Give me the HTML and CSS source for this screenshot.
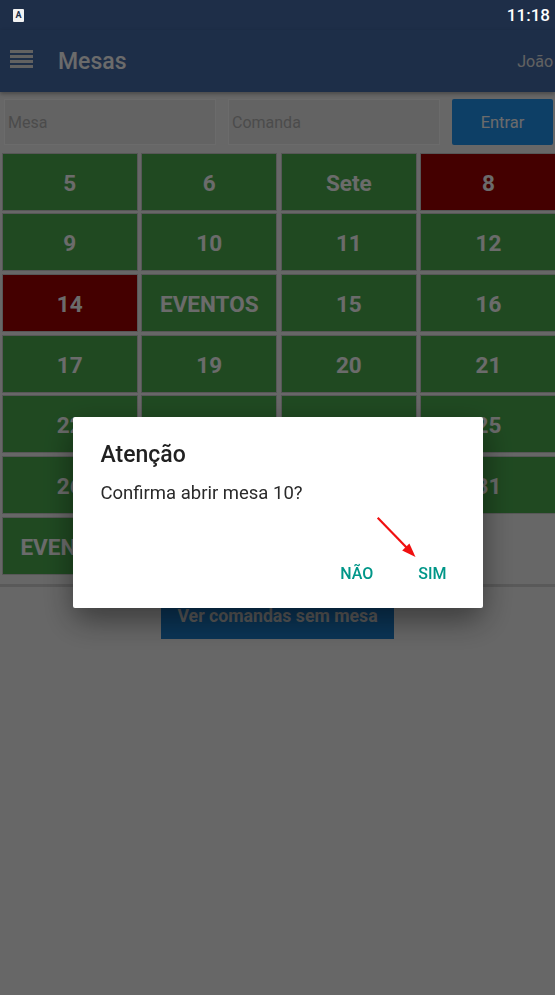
FILE: index.html
```html
<!DOCTYPE html>
<html lang="pt-BR">
  <head>
    <meta charset="UTF-8" />
    <meta name="viewport" content="width=device-width, initial-scale=1.0" />
    <title>Mesas</title>
    <link rel="stylesheet" href="styles.css">
  </head>

  <body>
    <div class="statusbar">
      <span class="status-icon">A</span>
      <span class="clock">11:18</span>
    </div>

    <header class="toolbar">
      <div class="menu-icon">
        <span></span><span></span><span></span><span></span>
      </div>
      <h1 class="title">Mesas</h1>
      <span class="user">João</span>
    </header>

    <form class="search">
      <input type="text" class="field" placeholder="Mesa" />
      <input type="text" class="field" placeholder="Comanda" />
      <button type="button" class="enter">Entrar</button>
    </form>

    <div class="tables">
      <div class="cell">5</div>
      <div class="cell">6</div>
      <div class="cell">Sete</div>
      <div class="cell busy">8</div>
      <div class="cell">9</div>
      <div class="cell">10</div>
      <div class="cell">11</div>
      <div class="cell">12</div>
      <div class="cell busy">14</div>
      <div class="cell">EVENTOS</div>
      <div class="cell">15</div>
      <div class="cell">16</div>
      <div class="cell">17</div>
      <div class="cell">19</div>
      <div class="cell">20</div>
      <div class="cell">21</div>
      <div class="cell">22</div>
      <div class="cell">23</div>
      <div class="cell">24</div>
      <div class="cell">25</div>
      <div class="cell">26</div>
      <div class="cell"></div>
      <div class="cell"></div>
      <div class="cell">31</div>
      <div class="cell">EVENTOS</div>
    </div>

    <div class="divider"></div>

    <div class="footer">
      <button type="button" class="no-table">Ver comandas sem mesa</button>
    </div>

    <!-- confirmation dialog -->
    <div class="scrim">
      <div class="dialog">
        <h2 class="dialog-title">Atenção</h2>
        <p class="dialog-text">Confirma abrir mesa 10?</p>
        <div class="dialog-actions">
          <button type="button">NÃO</button>
          <button type="button">SIM</button>
        </div>
        <svg class="pointer" width="50" height="50" viewBox="0 0 50 50">
          <line x1="4.7" y1="3.7" x2="34" y2="34" stroke="#f01010" stroke-width="2.2" />
          <polygon points="42.5,43 29.2,36.4 36.4,29.4" fill="#f01010" />
        </svg>
      </div>
    </div>
  </body>
</html>
```

FILE: styles.css
```css
* {
  margin: 0;
  padding: 0;
  box-sizing: border-box;
}

body {
  width: 555px;
  height: 995px;
  overflow: hidden;
  background-color: #f6f6f6;
  font-family: Roboto, "Noto Sans", sans-serif;
}

.statusbar {
  height: 30px;
  background-color: #1e2e48;
  display: flex;
  align-items: center;
  justify-content: space-between;
  padding: 0 5px 0 13px;
}

.status-icon {
  width: 11px;
  height: 13px;
  background-color: #f2f2f2;
  border-radius: 1px;
  color: #1e2e48;
  font-size: 9px;
  font-weight: 700;
  line-height: 12px;
  text-align: center;
}

.clock {
  color: #fff;
  font-size: 17px;
  font-weight: 500;
}

.toolbar {
  height: 62px;
  background-color: #476eab;
  display: flex;
  align-items: center;
  padding: 0 2px 0 10px;
  box-shadow: 0 2px 4px rgba(0, 0, 0, 0.3);
}

.menu-icon {
  width: 23px;
  display: flex;
  flex-direction: column;
  gap: 2px;
  margin-bottom: 5px;
}

.menu-icon span {
  height: 3px;
  background-color: #e6e6e6;
}

.title {
  flex: 1;
  margin-left: 25px;
  color: #fff;
  font-size: 23px;
  font-weight: 500;
}

.user {
  color: #e8e8e8;
  font-size: 16px;
}

.search {
  display: flex;
  gap: 12px;
  padding: 7px 2px 0 4px;
}

.field {
  width: 212px;
  height: 46px;
  padding: 0 3px;
  background-color: #ececec;
  border: 1px solid #ffffff;
  font-family: inherit;
  font-size: 16px;
}

.field::placeholder {
  color: #b4b4b4;
}

.enter {
  width: 101px;
  height: 46px;
  background-color: #2196f3;
  color: #fff;
  border: none;
  border-radius: 2px;
  font-family: inherit;
  font-size: 16.5px;
}

.tables {
  display: grid;
  grid-template-columns: repeat(4, 136px);
  grid-auto-rows: 58px;
  column-gap: 3.6px;
  row-gap: 2.7px;
  padding-left: 1.7px;
  margin-top: 7.6px;
  overflow: hidden;
}

.cell {
  display: flex;
  align-items: center;
  justify-content: center;
  background-color: #4caf50;
  border: 1px solid #cfcfcf;
  color: #fff;
  font-size: 22.5px;
  font-weight: 700;
  padding-top: 2px;
}

.cell.busy {
  background-color: #a30000;
}

.divider {
  height: 3px;
  margin-top: 9px;
  background-color: #d4d4d4;
}

.footer {
  display: flex;
  justify-content: center;
  padding-top: 6px;
}

.no-table {
  width: 233px;
  height: 46px;
  background-color: #1a7ecd;
  color: #d8d8d8;
  border: none;
  font-family: inherit;
  font-size: 17.7px;
  font-weight: 700;
}

.scrim {
  position: fixed;
  top: 30px;
  left: 0;
  right: 0;
  bottom: 0;
  background-color: rgba(0, 0, 0, 0.58);
  display: flex;
  align-items: center;
  justify-content: center;
}

.dialog {
  position: relative;
  width: 410px;
  padding: 24px 0;
  background-color: #fff;
  border-radius: 2px;
  box-shadow: 0 12px 32px rgba(0, 0, 0, 0.45);
}

.dialog-title {
  padding: 0 28px;
  color: #212121;
  font-size: 23px;
  font-weight: 500;
  line-height: 27px;
}

.dialog-text {
  margin-top: 13px;
  padding: 0 28px;
  color: #2a2a2a;
  font-size: 18.5px;
  line-height: 24px;
}

.dialog-actions {
  display: flex;
  justify-content: flex-end;
  gap: 45px;
  margin-top: 58.5px;
  padding-right: 36px;
}

.dialog-actions button {
  background: none;
  border: none;
  color: #009688;
  font-family: inherit;
  font-size: 16px;
  font-weight: 500;
  line-height: 20px;
}

.pointer {
  position: absolute;
  left: 300px;
  top: 97px;
}
```
